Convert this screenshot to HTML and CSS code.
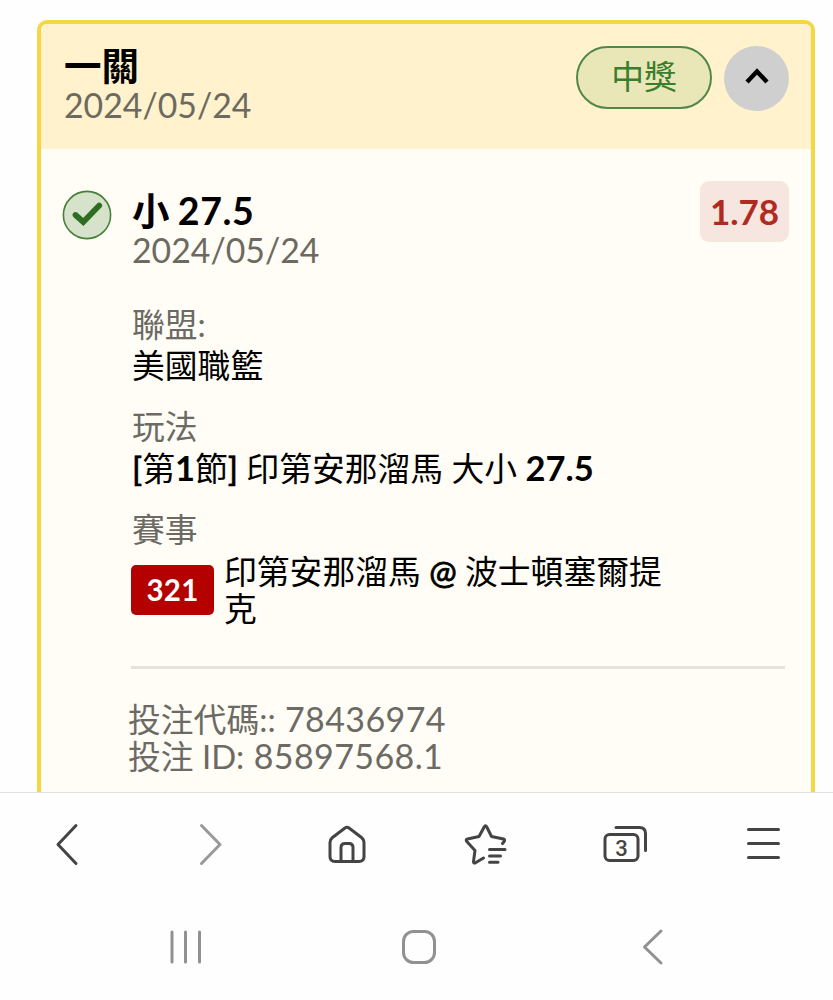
FILE: index.html
```html
<!DOCTYPE html>
<html lang="zh-Hant">
<head>
  <meta charset="UTF-8" />
  <meta name="viewport" content="width=device-width, initial-scale=1" />
  <title>投注紀錄</title>
  <link rel="stylesheet" href="styles.css">
</head>
<body>
  <main class="page">
    <div class="card">
      <div class="card-header">
        <div>
          <div class="card-title">一關</div>
          <div class="date">2024/05/24</div>
        </div>
        <div class="header-actions">
          <span class="status">中獎</span>
          <button class="toggle">
            <svg width="64" height="64" viewBox="0 0 64 64"><path d="M22 36 L32 25.500 L42 36" fill="none" stroke="#000" stroke-width="4.4"/></svg>
          </button>
        </div>
      </div>

      <div class="card-body">
        <svg class="check" width="50" height="50" viewBox="0 0 50 50">
          <circle cx="25" cy="25" r="23.6" fill="#d7e2cb" stroke="#457f3a" stroke-width="1.6"/>
          <path d="M13.500 25 L21.300 32 L37.200 15.500" fill="none" stroke="#2f6e22" stroke-width="5.8" stroke-linecap="round"/>
        </svg>
        <div class="bet">
          <div class="bet-top">
            <div>
              <div class="pick">小 27.5</div>
              <div class="date">2024/05/24</div>
            </div>
            <span class="odds">1.78</span>
          </div>

          <div class="field league">
            <div class="label">聯盟:</div>
            <div class="value">美國職籃</div>
          </div>
          <div class="field">
            <div class="label">玩法</div>
            <div class="value"><span class="mid">[</span>第<b>1</b>節<span class="mid">]</span> 印第安那溜馬 大小 <b>27.5</b></div>
          </div>
          <div class="field">
            <div class="label">賽事</div>
            <div class="match">
              <span class="match-no">321</span>
              <div class="value teams">印第安那溜馬 <span class="at">@</span> 波士頓塞爾提克</div>
            </div>
          </div>

          <div class="meta">
            <div>投注代碼:: <span class="num">78436974</span></div>
            <div>投注 ID: <span class="num">85897568.1</span></div>
          </div>
        </div>
      </div>
    </div>
  </main>

  <!-- browser toolbar -->
  <nav class="toolbar">
    <svg viewBox="0 0 48 48"><path d="M31 5.500 L13 24.500 L31 43.500"/></svg>
    <svg class="off" viewBox="0 0 48 48"><path d="M17.500 5.500 L36 24.500 L17.500 43.500"/></svg>
    <svg viewBox="0 0 48 48">
      <path d="M22 8 Q24 6.500 26 8 L38.500 17.500 Q41 19.500 41 22.500 V36.500 Q41 41.500 36 41.500 H12 Q7 41.500 7 36.500 V22.500 Q7 19.500 9.500 17.500 Z"/>
      <path d="M18 41 V27.500 Q18 23.500 22 23.500 H26 Q30 23.500 30 27.500 V41"/>
    </svg>
    <svg viewBox="0 0 48 48">
      <path d="M40.500 23.500 L42.500 21 Q42.800 19.300 41.500 19 L29.500 16.500 L24.800 7 Q23.500 4.500 22.200 7 L17 16.500 L5.500 19 Q3.300 19.600 4.800 21.600 L13 30.500 L11.500 41.500 Q11.500 43.800 13.500 42.800 L21.500 38"/>
      <path d="M27.500 29.500 H43 M27.500 36 H38.500 M27.500 42.200 H36"/>
    </svg>
    <svg viewBox="0 0 48 48">
      <rect x="4" y="14.500" width="33" height="26" rx="4.500"/>
      <path d="M15 7.500 H38.500 Q44.500 7.500 44.500 13.500 V30.500"/>
      <text x="20.500" y="35.500">3</text>
    </svg>
    <svg viewBox="0 0 48 48"><path d="M8.500 9.500 H38.500 M8.500 23.500 H38.500 M8.500 37.500 H38.500"/></svg>
  </nav>

  <!-- system buttons -->
  <nav class="sysbar">
    <svg viewBox="0 0 48 48"><path d="M10 9 V39 M23.500 9 V39 M37.500 9 V39"/></svg>
    <svg viewBox="0 0 48 48"><rect x="8.500" y="8.500" width="31" height="31" rx="10"/></svg>
    <svg viewBox="0 0 48 48"><path d="M33 8 L16.500 24 L33 40"/></svg>
  </nav>
</body>
</html>
```

FILE: styles.css
```css
* {
  box-sizing: border-box;
}

body {
  margin: 0;
  height: 1000px;
  overflow: hidden;
  background: #fefefe;
  font-family: Lato, "Noto Sans CJK TC", sans-serif;
  font-size: 32.8px;
  line-height: 37px;
  color: #000;
}

.page {
  height: 792px;
  overflow: hidden;
  padding: 20px 18px 0 37px;
}

.card {
  height: 900px;
  border: 4px solid #f5d742;
  border-radius: 10px;
  background: #fffdf5;
  overflow: hidden;
}

.card-header {
  display: flex;
  justify-content: space-between;
  height: 125px;
  padding: 22px 22px 0 23px;
  background: #fff2cc;
}

.card-title,
.pick {
  font-size: 37.5px;
  font-weight: 700;
  line-height: 39px;
}

.pick {
  letter-spacing: 0.6px;
  word-spacing: -2px;
}

.date {
  font-size: 33.8px;
  line-height: 40px;
  color: #6c6a60;
}

.header-actions {
  display: flex;
  gap: 12px;
}

.status {
  width: 136px;
  height: 63px;
  border: 2px solid #52874a;
  border-radius: 32px;
  background: #e9e7b8;
  color: #3a7d2c;
  line-height: 58px;
  text-align: center;
}

.toggle {
  width: 65px;
  height: 65px;
  padding: 0;
  border: none;
  border-radius: 50%;
  background: #cfcfcf;
}

.card-body {
  display: flex;
  padding: 32px 22px 0 21px;
}

.check {
  flex: none;
  margin-top: 9px;
}

.bet {
  flex: 1;
  margin-left: 20px;
}

.bet-top {
  display: flex;
  justify-content: space-between;
  padding-top: 10px;
}

.odds {
  width: 89px;
  height: 61px;
  margin-top: -10px;
  border-radius: 9px;
  background: #f7e6e0;
  color: #b12a22;
  font-size: 35px;
  font-weight: 700;
  line-height: 61px;
  text-align: center;
}

.field {
  margin-bottom: 20px;
}

.league {
  margin-top: 34px;
}

.label {
  line-height: 42px;
  color: #6c6a64;
}

.value {
  line-height: 40px;
}

.value b {
  font-size: 34.5px;
}

.mid {
  font-weight: 600;
  -webkit-text-stroke: 0.4px #000;
}

.at {
  -webkit-text-stroke: 0.8px #000;
}

.match {
  display: flex;
  align-items: center;
  margin-top: 2px;
}

.match-no {
  width: 83px;
  height: 50px;
  margin-left: -1px;
  border-radius: 5px;
  background: #b50000;
  color: #fff;
  font-size: 29.5px;
  font-weight: 700;
  letter-spacing: 0.3px;
  line-height: 50px;
  text-align: center;
}

.teams {
  width: 450px;
  margin-left: 10px;
  line-height: 37px;
}

.meta {
  margin: 39px 4px 0 -1px;
  padding: 31px 0 0;
  border-top: 3px solid #e6e3dc;
  color: #6c6a64;
}

.meta div {
  height: 37px;
  margin-left: -3px;
}

.num {
  margin-left: 1px;
  font-size: 34px;
  letter-spacing: 0.4px;
}

.toolbar,
.sysbar {
  display: flex;
  justify-content: space-between;
}

.toolbar {
  height: 104px;
  padding: 27px 45px 0;
  border-top: 1px solid #e2e0da;
}

.toolbar svg,
.sysbar svg {
  width: 48px;
  height: 48px;
  fill: none;
  stroke: #444;
  stroke-width: 3;
  stroke-linecap: round;
  stroke-linejoin: round;
}

.toolbar .off {
  stroke: #999;
}

.toolbar text {
  fill: #444;
  stroke: none;
  font-family: Roboto, sans-serif;
  font-size: 22px;
  font-weight: 500;
  text-anchor: middle;
}

.sysbar {
  padding: 27px 157px 0 162px;
}

.sysbar svg {
  stroke: #919191;
}
```
